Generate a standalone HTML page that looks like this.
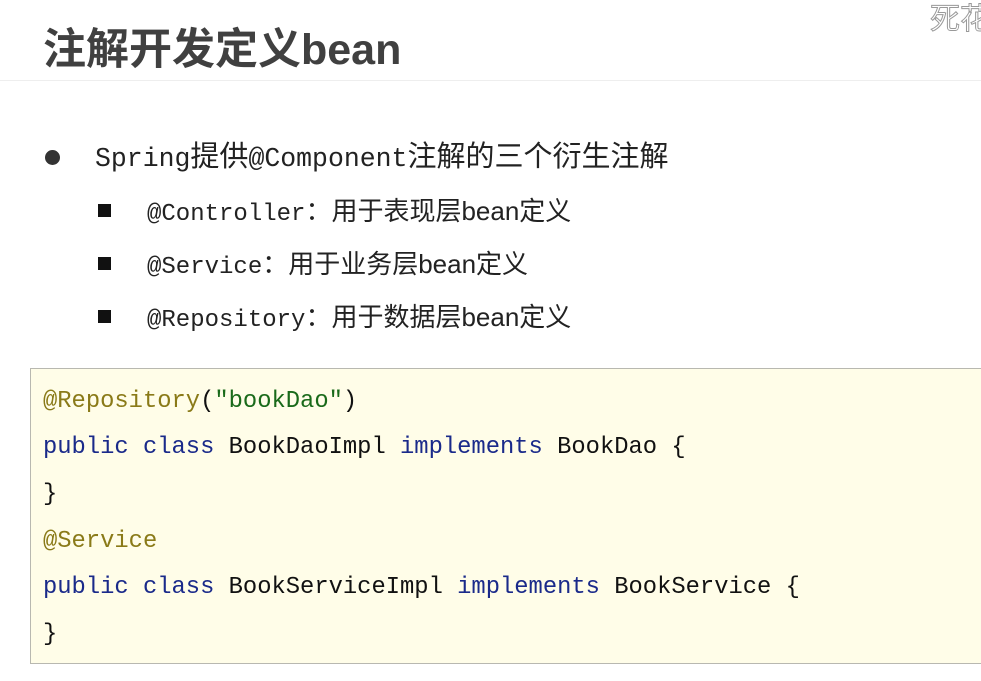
<!DOCTYPE html>
<html><head><meta charset="utf-8"><style>
body{margin:0;width:981px;height:681px;background:#fff;position:relative;overflow:hidden;font-family:"Liberation Sans","Noto Sans CJK SC",sans-serif;}
.t{position:absolute;left:43px;top:15px;font-size:43px;font-weight:bold;color:#404040;white-space:nowrap;}
.hr{position:absolute;left:0;top:80px;width:981px;height:1px;background:#eee;}
.m{font-family:"Liberation Mono",monospace;}
.l1{position:absolute;left:95px;top:139px;font-size:29px;color:#222;white-space:nowrap;line-height:36px;}
.l1 .m{font-size:26.5px;}
.dot{position:absolute;left:45px;top:150px;width:15px;height:15px;border-radius:50%;background:#333;}
.sq{position:absolute;left:98px;width:13px;height:13px;background:#111;}
.l2{position:absolute;left:147px;font-size:26px;color:#222;white-space:nowrap;line-height:34px;}
.l2 .m{font-size:24px;}
.code{position:absolute;left:30px;top:368px;width:960px;height:294px;background:#fffde8;border:1px solid #b8b8b0;}
.cl{position:absolute;left:43px;font-family:"Liberation Mono",monospace;font-size:23.8px;white-space:pre;color:#111;line-height:30px;}
.a{color:#8a7a18}.s{color:#1a6a1a}.k{color:#1a2a8a}
.wm{position:absolute;left:930px;top:-6px;font-size:30px;color:#fff;-webkit-text-stroke:1px #999;font-family:"Noto Sans CJK SC",sans-serif;white-space:nowrap;}
</style></head><body>
<div class="t">注解开发定义bean</div>
<div class="wm">死花</div>
<div class="hr"></div>
<div class="dot"></div>
<div class="l1"><span class="m">Spring</span>提供<span class="m">@Component</span>注解的三个衍生注解</div>
<div class="sq" style="top:204px"></div>
<div class="l2" style="top:194px"><span class="m">@Controller</span>：用于表现层bean定义</div>
<div class="sq" style="top:257px"></div>
<div class="l2" style="top:247px"><span class="m">@Service</span>：用于业务层bean定义</div>
<div class="sq" style="top:310px"></div>
<div class="l2" style="top:300px"><span class="m">@Repository</span>：用于数据层bean定义</div>
<div class="code"></div>
<div class="cl" style="top:387px"><span class="a">@Repository</span>(<span class="s">"bookDao"</span>)</div>
<div class="cl" style="top:433px"><span class="k">public class</span> BookDaoImpl <span class="k">implements</span> BookDao {</div>
<div class="cl" style="top:480px">}</div>
<div class="cl" style="top:527px"><span class="a">@Service</span></div>
<div class="cl" style="top:573px"><span class="k">public class</span> BookServiceImpl <span class="k">implements</span> BookService {</div>
<div class="cl" style="top:620px">}</div>
</body></html>
